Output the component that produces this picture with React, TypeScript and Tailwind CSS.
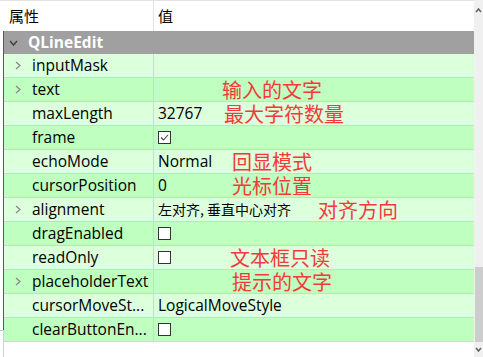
import React from 'react';

type Row = {
  name: string;
  value?: string;
  small?: boolean;
  check?: boolean;
  checked?: boolean;
  expand?: boolean;
  note?: string;
  noteX?: number;
};

const rows: Row[] = [
  { name: 'inputMask', expand: true },
  { name: 'text', expand: true, note: '输入的文字', noteX: 222 },
  { name: 'maxLength', value: '32767', note: '最大字符数量', noteX: 224 },
  { name: 'frame', check: true, checked: true },
  { name: 'echoMode', value: 'Normal', note: '回显模式', noteX: 232 },
  { name: 'cursorPosition', value: '0', note: '光标位置', noteX: 232 },
  { name: 'alignment', expand: true, value: '左对齐, 垂直中心对齐', small: true, note: '对齐方向', noteX: 318 },
  { name: 'dragEnabled', check: true },
  { name: 'readOnly', check: true, note: '文本框只读', noteX: 230 },
  { name: 'placeholderText', expand: true, note: '提示的文字', noteX: 232 },
  { name: 'cursorMoveSt...', value: 'LogicalMoveStyle' },
  { name: 'clearButtonEn...', check: true },
];

const font = { fontFamily: '"Open Sans", "Noto Sans CJK SC", sans-serif' };
const cjk = { fontFamily: '"Noto Sans CJK SC", sans-serif' };

const Chevron = () => (
  <svg width="6" height="9" viewBox="0 0 6 9" className="ml-[11px]">
    <polyline points="1,1 5,4.5 1,8" fill="none" stroke="#8a8a8a" strokeWidth="1.3" />
  </svg>
);

const CheckBox = ({ checked }: { checked?: boolean }) => (
  <div className="w-[13px] h-[13px] border border-[#333] bg-white flex items-center justify-center">
    {checked && (
      <svg width="9" height="7" viewBox="0 0 9 7">
        <polyline points="1,3.5 3.5,6 8,1" fill="none" stroke="#444" strokeWidth="1.1" />
      </svg>
    )}
  </div>
);

export default function App() {
  return (
    <div className="w-[483px] h-[357px] bg-white flex overflow-hidden text-black" style={font}>
      {/* left gutter */}
      <div className="w-[4px] flex flex-col shrink-0">
        <div className="h-[31px] border-t border-[#e3e3e3]" />
        <div className="h-[299px] border-r border-[#5a5a5a]" />
        <div className="flex-1 border-t border-[#c8c8c8] border-r border-r-[#d0d0d0] bg-white" />
      </div>

      {/* table */}
      <div className="w-[470px] flex flex-col shrink-0">
        <div className="h-[31px] flex border-t border-[#e3e3e3] text-[15px]" style={cjk}>
          <div className="w-[150px] pl-[5px] flex items-center border-r border-[#e3e3e3]">属性</div>
          <div className="flex-1 pl-[4px] flex items-center">值</div>
        </div>
        <div className="h-[23px] bg-[#a0a0a0] flex items-center">
          <svg width="9" height="6" viewBox="0 0 9 6" className="ml-[5px]">
            <polyline points="1,1 4.5,5 8,1" fill="none" stroke="#3c3c3c" strokeWidth="1.4" />
          </svg>
          <span className="ml-[10px] text-white font-bold text-[15.5px]">QLineEdit</span>
        </div>
        {rows.map((r, i) => (
          <div
            key={r.name}
            className={`relative h-[24px] flex border-b border-[#d4d4d4] ${i % 2 === 0 ? 'bg-[#dcffdc]' : 'bg-[#bfffbf]'}`}
          >
            <div className="w-[150px] flex items-center border-r border-[#d4d4d4] text-[15.5px]">
              <div className="w-[28px] flex items-center">{r.expand && <Chevron />}</div>
              <span className="whitespace-nowrap">{r.name}</span>
            </div>
            <div className="flex-1 flex items-center pl-[4px]">
              {r.check ? (
                <CheckBox checked={r.checked} />
              ) : r.value ? (
                <span className={r.small ? 'text-[14px] whitespace-pre' : 'text-[15.5px]'} style={r.small ? cjk : undefined}>
                  {r.value}
                </span>
              ) : null}
            </div>
            {r.note && (
              <span
                className="absolute top-0 text-[20px] leading-[23px] text-[#f23a3a]"
                style={{ ...cjk, left: (r.noteX ?? 222) - 4 }}
              >
                {r.note}
              </span>
            )}
          </div>
        ))}
      </div>

      {/* scrollbar */}
      <div className="flex-1 bg-[#f0f0f0] flex flex-col items-stretch">
        <div className="h-[20px] flex items-center justify-center">
          <svg width="7" height="5" viewBox="0 0 7 5">
            <polyline points="1,4 3.5,1 6,4" fill="none" stroke="#606060" strokeWidth="1.5" />
          </svg>
        </div>
        <div className="h-[247px]" />
        <div className="h-[75px] bg-[#cdcdcd] ml-[1px]" />
        <div className="flex-1 flex items-center justify-center">
          <svg width="7" height="5" viewBox="0 0 7 5">
            <polyline points="1,1 3.5,4 6,1" fill="none" stroke="#606060" strokeWidth="1.5" />
          </svg>
        </div>
      </div>
    </div>
  );
}
